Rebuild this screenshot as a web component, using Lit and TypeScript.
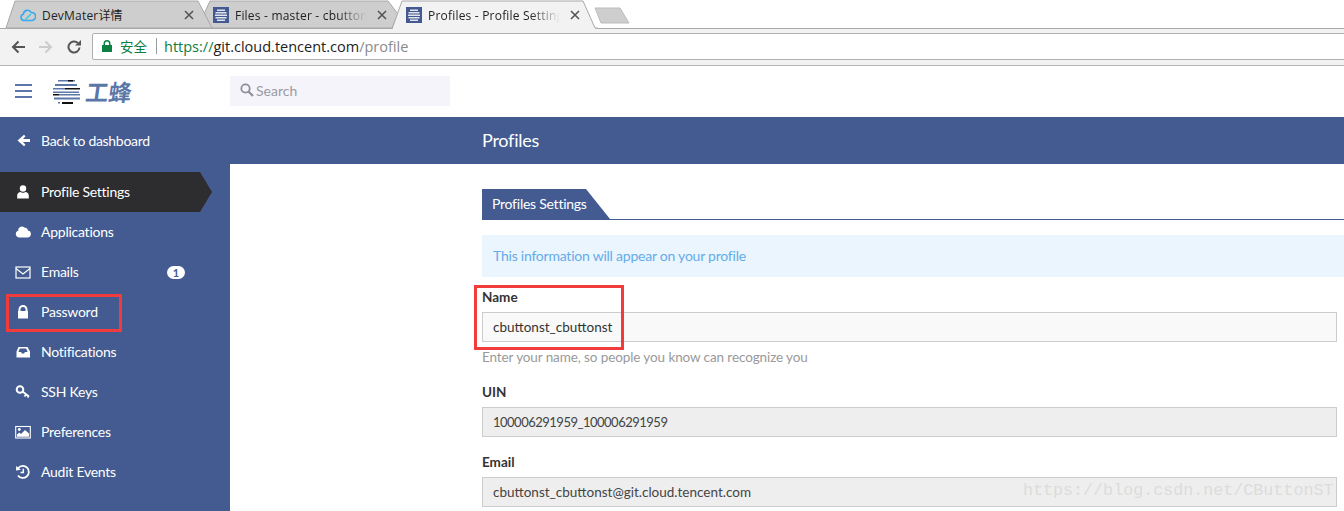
import { LitElement, html, css, svg } from "lit";
import { customElement } from "lit/decorators.js";

const favicon = html`<svg class="fav" viewBox="0 0 16 16"><rect width="16" height="16" fill="#44598f"/><g fill="#dfe4ee"><rect x="4" y="2.500" width="8" height="1.500"/><rect x="2.500" y="5" width="11" height="1.500"/><rect x="2" y="7.500" width="12" height="1.500"/><rect x="2.500" y="10" width="11" height="1.500"/><rect x="4" y="12.500" width="8" height="1.500"/></g></svg>`;
const cloudFav = html`<svg class="fav" viewBox="0 0 16 16"><path d="M4 13.500a3.200 3.200 0 0 1-.6-6.300A4.200 4.200 0 0 1 11.300 5.500 4 4 0 0 1 12 13.500Z" fill="none" stroke="#3aa8ee" stroke-width="1.600"/><path d="M5 13 11 7" stroke="#30c8e8" stroke-width="1.500"/></svg>`;
const closeX = html`<svg class="close" viewBox="0 0 10 10"><path d="M1 1 9 9M9 1 1 9" stroke="#555" stroke-width="1.600"/></svg>`;

const icons: Record<string, unknown> = {
  user: svg`<circle cx="8" cy="4.500" r="3.200"/><path d="M2.200 14.500V11.500C2.200 9.300 4 8.200 5.500 8 6.500 9 9.500 9 10.500 8 12 8.200 13.800 9.300 13.800 11.500V14.500Z"/>`,
  cloud: svg`<path d="M4 13.500A3.500 3.500 0 0 1 .3 10C.3 8.300 1.300 7.200 2.700 6.800A3.700 3.700 0 0 1 8.800 3.500 4 4 0 0 1 12.500 6.600 3.500 3.500 0 0 1 12.500 13.500Z" transform="translate(0.500 0)"/>`,
  mail: svg`<rect x="1" y="3" width="14" height="11" fill="none" stroke="#fff" stroke-width="1.200"/><path d="M1 4.500 8 10 15 4.500" fill="none" stroke="#fff" stroke-width="1.200"/>`,
  lock: svg`<path fill-rule="evenodd" d="M3.500 7V5.500a4.500 4.500 0 0 1 9 0V7h.5V14.500H3V7ZM5.500 7h5V5.500a2.500 2.500 0 0 0-5 0Z"/>`,
  inbox: svg`<path fill-rule="evenodd" d="M3.500 3h9L15 7.500V13.500H1.500V7.500ZM4.800 4.500 3.400 8H6L7 9.500H9L10 8H12.600L11.200 4.500Z"/>`,
  key: svg`<circle cx="5" cy="5.500" r="3.300" fill="none" stroke="#fff" stroke-width="2"/><path d="M7.500 7.500 14 12.500M11 10.500 9.500 12.500M13.500 12 12.500 13.500" fill="none" stroke="#fff" stroke-width="1.800"/>`,
  picture: svg`<rect x=".7" y="2.500" width="14.600" height="11.500" fill="none" stroke="#fff" stroke-width="1.100"/><circle cx="4.300" cy="5.500" r="1.400"/><path d="M2 12.800V10.500L4.500 8.500 6 10 10 6 14 9.500V12.800Z"/>`,
  history: svg`<path d="M3.300 4A6 6 0 1 1 3 11.500" fill="none" stroke="#fff" stroke-width="1.800"/><path d="M1.200 2 5.800 5.800 1 6.500Z"/><path d="M8.300 4.800V8.500H5.500" fill="none" stroke="#fff" stroke-width="1.500"/>`,
};

const nav = [
  { label: "Profile Settings", icon: "user", active: true },
  { label: "Applications", icon: "cloud" },
  { label: "Emails", icon: "mail", badge: "1" },
  { label: "Password", icon: "lock" },
  { label: "Notifications", icon: "inbox" },
  { label: "SSH Keys", icon: "key" },
  { label: "Preferences", icon: "picture" },
  { label: "Audit Events", icon: "history" },
];

@customElement("app-root")
export class AppRoot extends LitElement {
  static styles = css`
    :host { display: block; position: relative; width: 1344px; height: 511px; overflow: hidden; background: #fff;
      font-family: "Lato", "Noto Sans CJK SC", sans-serif; }
    * { box-sizing: border-box; }

    .strip { position: relative; height: 28px; display: flex; padding-left: 6px; background: #fff; }
    .strip-bg { position: absolute; inset: 0; width: 1344px; height: 29px; }
    .tab { position: relative; width: 193px; height: 28px; display: flex; align-items: center; padding: 2px 2px 0 14px;
      font: 12px "Open Sans", "Noto Sans CJK SC", sans-serif; letter-spacing: .2px; color: #222; }
    .tab-text { flex: 1; margin-left: 6px; white-space: nowrap;
      -webkit-mask-image: linear-gradient(to right, #000 calc(100% - 40px), transparent calc(100% - 10px));
      mask-image: linear-gradient(to right, #000 calc(100% - 40px), transparent calc(100% - 10px)); }
    .tab-text.plain { -webkit-mask-image: none; mask-image: none; }
    .fav { width: 16px; height: 16px; flex: none; }
    .close { width: 10px; height: 10px; flex: none; margin-right: 3px; }

    .toolbar { height: 38px; background: #f2f2f2; border-bottom: 1px solid #b5b5b5; display: flex; align-items: center; padding: 0 0 0 11px; }
    .nav-btn { width: 14px; height: 14px; margin-right: 14px; flex: none; }
    .omni { flex: 1; margin-left: -3px; margin-right: -4px; height: 27px; background: #fff; border: 1px solid #b0b0b0; border-radius: 2px;
      display: flex; align-items: center; padding: 0 0 1px 9px; font: 14.500px "Open Sans", "Noto Sans CJK SC", sans-serif; }
    .lock { width: 10px; height: 12px; flex: none; }
    .secure { margin-left: 8px; font-size: 13.500px; color: #0b8043; }
    .sep { width: 1px; height: 16px; background: #999; margin: 0 7px 0 9px; }
    .scheme { color: #0b8043; }
    .host-name { color: #222; }
    .path { color: #8a8a8a; }

    .header { height: 51px; display: flex; align-items: center; padding: 0 0 1px 15px; background: #fff; }
    .burger { width: 17px; height: 14px; flex: none; display: flex; flex-direction: column; justify-content: space-between; }
    .burger span { height: 2px; background: #5d76a9; }
    .logo { width: 28px; height: 26px; margin-left: 20px; flex: none; }
    .brand { width: 48px; margin-left: 6px; font: bold 23px "Noto Sans CJK SC", sans-serif; color: #5a77a8; transform: skewX(-8deg); white-space: nowrap; line-height: 26px; }
    .search { margin-left: 96px; width: 220px; height: 30px; background: #f4f4fa; display: flex; align-items: center; padding: 0 0 2px 10px; color: #9b9ba3; font-size: 14px; }
    .search svg { width: 14px; height: 14px; margin-right: 2px; }

    .bar { height: 47px; background: #435b91; display: flex; align-items: center; color: #fff; }
    .back { width: 230px; padding-left: 17px; display: flex; align-items: center; font-size: 14px; letter-spacing: -.3px; }
    .back svg { width: 13px; height: 13px; margin-right: 11px; }
    .title { margin: 0 0 2px 252px; font-size: 18px; letter-spacing: -.25px; }

    .body { display: flex; height: 347px; }
    .side { width: 230px; flex: none; background: #435b91; padding-top: 8px; color: #fff; font-size: 14px; letter-spacing: -.25px; }
    .item { position: relative; height: 40px; width: 212px; display: flex; align-items: center; padding-left: 15px; }
    .item.active { background: #2d2d2f; clip-path: polygon(0 0, 200px 0, 212px 50%, 200px 100%, 0 100%); }
    .item svg { width: 16px; height: 16px; fill: #fff; margin-right: 10px; flex: none; }
    .label { flex: 1; margin-bottom: 2px; }
    .badge { background: #fff; color: #435b91; font-size: 11px; font-weight: 700; line-height: 13px; height: 13px; width: 18px; border-radius: 7px; text-align: center; margin-right: 27px; letter-spacing: 0; }

    .main { flex: 1; padding: 25px 7px 0 252px; font-size: 14px; color: #333; }
    .tabs { height: 31px; border-bottom: 1px solid #435b91; margin-right: -7px; }
    .tabs span { display: inline-flex; align-items: center; height: 30px; width: 128px; padding: 0 0 2px 10px; background: #435b91; color: #fff; font-size: 14px; letter-spacing: -.25px;
      clip-path: polygon(0 0, 104px 0, 128px 100%, 0 100%); }
    .info { margin-top: 15px; height: 42px; margin-right: -7px; background: #eaf5fe; color: #65ace8; display: flex; align-items: center; padding: 0 0 2px 11px; letter-spacing: -.23px; }
    .field { display: flex; flex-direction: column; }
    .field label { font-weight: 700; font-size: 13.500px; color: #333; line-height: 20px; margin-top: 10px; margin-bottom: 5px; }
    .field + .field label { margin-top: 15px; }
    .input { height: 30px; border: 1px solid #ccc; background: #f9f9f9; display: flex; align-items: center; padding-left: 10px; font-size: 13.500px; color: #333; }
    .input.ro { background: #eee; color: #444; }
    .input.num { font-size: 13px; letter-spacing: -.5px; }
    .help { color: #999; font-size: 13.500px; margin-top: 5px; line-height: 20px; letter-spacing: -.1px; }

    .mark { position: absolute; border: 3px solid #f23b3b; pointer-events: none; }
    .mark.a { left: 6px; top: 294px; width: 116px; height: 38px; }
    .mark.b { left: 474px; top: 285px; width: 150px; height: 65px; }
    .wm { position: absolute; left: 1023px; top: 481px; font: 16.700px "Liberation Mono", monospace; color: #dcdcdc; white-space: nowrap; pointer-events: none; }
  `;

  render() {
    return html`
      <div class="strip">
        <svg class="strip-bg" viewBox="0 0 1344 29">
          <rect x="0" y="28" width="1344" height="1" fill="#a9a9a9"/>
          <path d="M204 14 210 1H388L398 14 392 28H209Z" fill="#cecece" stroke="#a8a8a8"/>
          <path d="M6 28 15 1H198L212 28Z" fill="#cecece" stroke="#a8a8a8"/>
          <path d="M392 29 402 1H583L595 28H598V29Z" fill="#f2f2f2" stroke="#a8a8a8"/>
          <path d="M595 8H620L629 23H601Z" fill="#cecece" stroke="#bdbdbd" stroke-linejoin="round"/>
          <rect x="393" y="28" width="202" height="1.500" fill="#f2f2f2"/>
        </svg>
        <div class="tab">${cloudFav}<span class="tab-text plain">DevMater详情</span>${closeX}</div>
        <div class="tab">${favicon}<span class="tab-text">Files - master - cbutton</span>${closeX}</div>
        <div class="tab">${favicon}<span class="tab-text">Profiles - Profile Setting</span>${closeX}</div>
      </div>
      <div class="toolbar">
        <svg class="nav-btn" viewBox="0 0 14 14"><path d="M14 7H2M7.500 1.500 2 7 7.500 12.500" fill="none" stroke="#555" stroke-width="2"/></svg>
        <svg class="nav-btn" viewBox="0 0 14 14"><path d="M0 7H12M6.500 1.500 12 7 6.500 12.500" fill="none" stroke="#ccc" stroke-width="2"/></svg>
        <svg class="nav-btn" viewBox="0 0 14 14"><path d="M12.500 7.500A5.500 5.500 0 1 1 10.800 3" fill="none" stroke="#555" stroke-width="2"/><path d="M8 5.500H14V0Z" fill="#555"/></svg>
        <div class="omni">
          <svg class="lock" viewBox="0 0 10 12"><path fill="#0b8043" fill-rule="evenodd" d="M1.500 5V3.500a3.500 3.500 0 0 1 7 0V5H10V12H0V5ZM3 5H7V3.500a2 2 0 0 0-4 0Z"/></svg>
          <span class="secure">安全</span><span class="sep"></span>
          <span><span class="scheme">https://</span><span class="host-name">git.cloud.tencent.com</span><span class="path">/profile</span></span>
        </div>
      </div>
      <div class="header">
        <div class="burger"><span></span><span></span><span></span></div>
        <svg class="logo" viewBox="0 0 28 26">
          <g fill="#5a77a8"><rect x="6" y="2" width="17" height="1.500"/><rect x="3" y="6" width="22" height="2"/><rect x="1" y="10" width="12" height="1.500"/><rect x="1" y="13.500" width="26" height="1.500"/><rect x="7" y="16" width="21" height="1.500"/><rect x="2" y="19.500" width="26" height="2"/><rect x="6" y="24" width="2" height="1.500"/></g>
          <g fill="#111"><rect x="16" y="2" width="5" height="1.500"/><rect x="13" y="10" width="15" height="1.500"/><rect x="1" y="16" width="6" height="1.500"/><rect x="10" y="24" width="11" height="2"/></g>
        </svg>
        <div class="brand">工蜂</div>
        <div class="search">
          <svg viewBox="0 0 14 14"><circle cx="5.500" cy="5.500" r="4.200" fill="none" stroke="#8e8e96" stroke-width="1.800"/><path d="M8.500 8.500 13 13" stroke="#8e8e96" stroke-width="2.200"/></svg>
          Search
        </div>
      </div>
      <div class="bar">
        <div class="back"><svg viewBox="0 0 13 13"><path d="M13 5H6L8.500 2.200 7 .8 .5 6.500 7 12.200 8.500 10.800 6 8H13Z" fill="#fff"/></svg>Back to dashboard</div>
        <div class="title">Profiles</div>
      </div>
      <div class="body">
        <nav class="side">
          ${nav.map(n => html`<div class="item ${n.active ? "active" : ""}">
            <svg viewBox="0 0 16 16">${icons[n.icon]}</svg>
            <span class="label">${n.label}</span>
            ${n.badge ? html`<span class="badge">${n.badge}</span>` : ""}
          </div>`)}
        </nav>
        <main class="main">
          <div class="tabs"><span>Profiles Settings</span></div>
          <div class="info">This information will appear on your profile</div>
          <div class="field"><label>Name</label><div class="input">cbuttonst_cbuttonst</div><div class="help">Enter your name, so people you know can recognize you</div></div>
          <div class="field"><label>UIN</label><div class="input ro num">100006291959_100006291959</div></div>
          <div class="field"><label>Email</label><div class="input ro">cbuttonst_cbuttonst@git.cloud.tencent.com</div></div>
        </main>
      </div>
      <div class="mark a"></div>
      <div class="mark b"></div>
      <div class="wm">https://blog.csdn.net/CButtonST</div>
    `;
  }
}
